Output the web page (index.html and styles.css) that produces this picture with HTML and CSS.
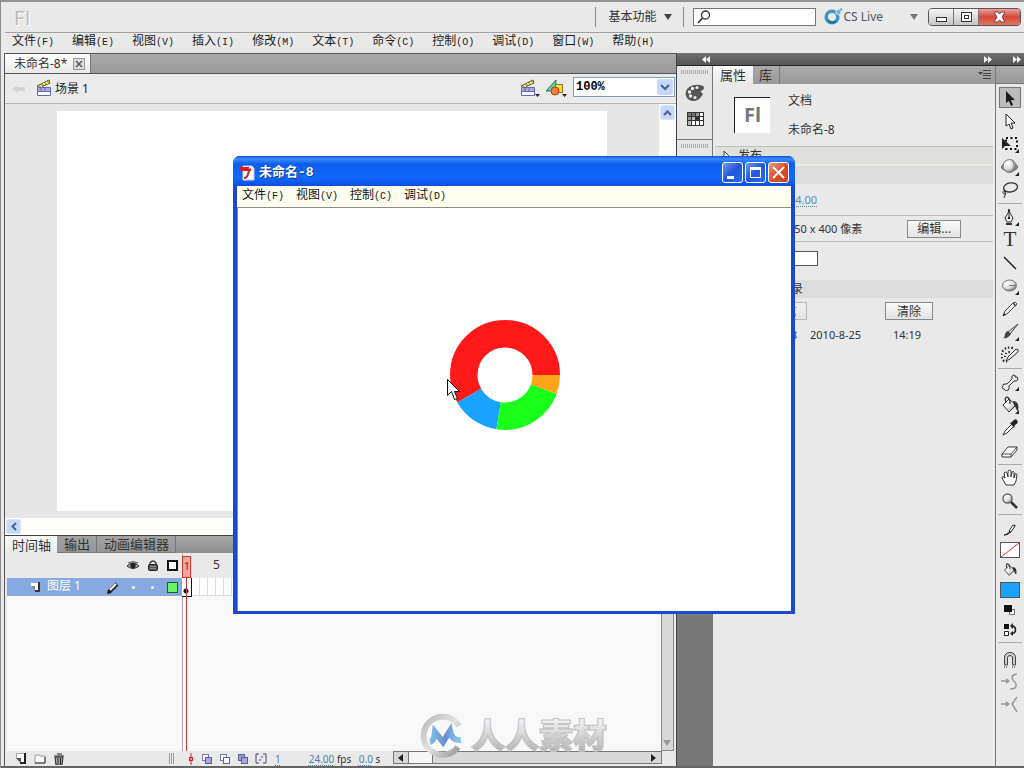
FILE: index.html
```html
<!DOCTYPE html>
<html lang="zh-CN">
<head>
<meta charset="utf-8">
<title>未命名-8</title>
<link rel="stylesheet" href="styles.css">
</head>
<body>
<svg class="defs" aria-hidden="true">
  <defs>
    <linearGradient id="metal" x1="0" y1="0" x2="1" y2="1"><stop offset="0" stop-color="#fff"/><stop offset=".5" stop-color="#eee"/><stop offset="1" stop-color="#888"/></linearGradient>
    <radialGradient id="ball" cx=".35" cy=".3" r=".8"><stop offset="0" stop-color="#fff"/><stop offset=".55" stop-color="#ddd"/><stop offset="1" stop-color="#555"/></radialGradient>
    <linearGradient id="ring" x1="0" y1="0" x2="1" y2="1"><stop offset="0" stop-color="#b9b9b9"/><stop offset=".5" stop-color="#e2e2e2"/><stop offset="1" stop-color="#969696"/></linearGradient>
    <linearGradient id="wave" x1="0" y1="0" x2="1" y2="0"><stop offset="0" stop-color="#7cc0e8"/><stop offset=".5" stop-color="#6d8fd0"/><stop offset="1" stop-color="#8ed0ee"/></linearGradient>
    <symbol id="clapper" viewBox="0 0 16 18"><path d="M1 7 13 1l1 3L3 9z" fill="#c9bf35" stroke="#65601f"/><path d="M4 6l2 2M7 4l2 2M10 3l2 2" stroke="#fff" stroke-width="1"/><path d="M1.500 8.500h13v8h-13z" fill="#fff" stroke="#6468b4"/><path d="M2 9h12v3H2z" fill="#a8abdc"/><path d="M2 12.500h12M5 9v3M9 9v3" stroke="#6468b4"/></symbol>
    <symbol id="forward" viewBox="0 0 8 7"><path d="M0 0l4 3.500L0 7zM4 0l4 3.500L4 7z" fill="#f4f4f4"/></symbol>
    <symbol id="corner" viewBox="0 0 4 4"><path d="M4 0v4H0z" fill="#222"/></symbol>
    <symbol id="bucket" viewBox="0 0 18 18"><path d="M2 9 8 3l7 6-7 7z" fill="url(#metal)" stroke="#333"/><path d="M5 7C2-1 9-1 9 8" fill="none" stroke="#333" stroke-width="1.300"/><path d="M12 5c5 0 6 4 5 10-2-1-2-4-4-6z" fill="#333"/></symbol>
    <symbol id="pencil" viewBox="0 0 18 18"><path d="M2 16l2-5 8-8q3-2 4 1L7 13z" fill="url(#metal)" stroke="#444"/><path d="M2 16l1-3 2 2z" fill="#222"/><path d="M12 3l3 3" stroke="#444" stroke-width="1.500"/></symbol>
  </defs>
</svg>
<div class="app">
  <header class="titlebar">
    <span class="brand">Fl</span>
    <div class="titletools">
      <button class="workspace-switch">基本功能<svg width="9" height="6"><path d="M0 0h8L4 6z" fill="#444"/></svg></button>
      <label class="search" aria-label="搜索"><svg width="14" height="14" viewBox="0 0 14 14"><circle cx="8.500" cy="5" r="4" fill="none" stroke="#333" stroke-width="1.300"/><path d="M5.500 8 1 13" stroke="#333" stroke-width="1.700"/></svg><input type="text"></label>
      <button class="cslive"><svg width="19" height="18" viewBox="0 0 19 18"><circle cx="8" cy="9" r="5.800" fill="none" stroke="#3f98bd" stroke-width="3.600"/><path d="M4 12a5 5 0 0 0 8 1" fill="none" stroke="#216f99" stroke-width="2"/><circle cx="14.500" cy="4" r="2.600" fill="#60b5d3" stroke="#e8e8e8"/><circle cx="17" cy="1.500" r="1.200" fill="#60b5d3"/></svg><span>CS Live</span><svg class="caret" width="8" height="6"><path d="M0 0h8L4 6z" fill="#777"/></svg></button>
      <div class="appbuttons">
        <button aria-label="最小化"><svg width="13" height="12"><rect x="1.500" y="6.500" width="10" height="4" fill="#fff" stroke="#333"/></svg></button>
        <button aria-label="还原"><svg width="13" height="12"><rect x="1.500" y="1.500" width="10" height="9" fill="#fff" stroke="#333"/><rect x="4.500" y="4.500" width="4" height="3" fill="#fff" stroke="#333"/></svg></button>
        <button class="close" aria-label="关闭"><svg width="13" height="12" viewBox="0 0 13 12"><path d="M1 1h4l1.500 2L8 1h4L9 6l3 5H8L6.500 9 5 11H1l3-5z" fill="#fff" stroke="#744"/></svg></button>
      </div>
    </div>
  </header>
  <nav class="menubar">
    <button>文件<span>(F)</span></button><button>编辑<span>(E)</span></button><button>视图<span>(V)</span></button><button>插入<span>(I)</span></button><button>修改<span>(M)</span></button><button>文本<span>(T)</span></button><button>命令<span>(C)</span></button><button>控制<span>(O)</span></button><button>调试<span>(D)</span></button><button>窗口<span>(W)</span></button><button>帮助<span>(H)</span></button>
  </nav>
  <div class="workspace">
    <main class="document">
      <div class="doctabs"><div class="doctab">未命名-8*<button aria-label="关闭文档"><svg width="8" height="8"><path d="M1 1l6 6M7 1 1 7" stroke="#555" stroke-width="1.500"/></svg></button></div></div>
      <div class="editbar">
        <svg width="14" height="10" viewBox="0 0 14 10"><path d="M0 5l5-4v2h8v4H5v2z" fill="#d2d2d2"/></svg>
        <svg class="scene" width="16" height="18"><use href="#clapper"/></svg><span class="scenename">场景 1</span>
        <div class="edittools">
          <button aria-label="编辑场景"><svg width="21" height="19"><use href="#clapper" width="16" height="18"/><path d="M15 15h5l-2.500 3z" fill="#222"/></svg></button>
          <button aria-label="编辑元件"><svg width="22" height="19" viewBox="0 0 22 19"><path d="M0 12 10 1v11z" fill="#5bd39a" stroke="#237a55"/><rect x="9.500" y="5.500" width="7" height="8" fill="#f0dc3c" stroke="#8c7b20"/><circle cx="9" cy="12" r="4" fill="#ff7a3c" stroke="#a8421d"/><path d="M16 15h5l-2.500 3z" fill="#222"/></svg></button>
          <label class="zoom"><select aria-label="缩放"><option>100%</option></select><svg width="16" height="16"><rect width="16" height="16" rx="2" fill="#c6d8fc"/><path d="M4 6l4 4 4-4" fill="none" stroke="#4d6185" stroke-width="2"/></svg></label>
        </div>
      </div>
      <div class="canvas">
        <div class="stage"></div>
        <div class="vscroll"><button aria-label="向上"><svg width="9" height="6"><path d="M1 5l3.500-3.500L8 5" fill="none" stroke="#4d6185" stroke-width="2"/></svg></button></div>
      </div>
      <div class="hscroll"><button aria-label="向左"><svg width="6" height="9"><path d="M5 1 1.500 4.500 5 8" fill="none" stroke="#4d6185" stroke-width="2"/></svg></button></div>
      <div class="tltabs"><button class="on">时间轴</button><button>输出</button><button>动画编辑器</button></div>
      <section class="timeline">
        <div class="layers">
          <div class="layerhead">
            <svg width="12" height="9" viewBox="0 0 12 9"><path d="M0 5Q6-1 12 5 6 10 0 5z" fill="#aaa" stroke="#333"/><circle cx="6" cy="4.500" r="2.700" fill="#222"/><path d="M1 2q5-3 10 0" stroke="#555" fill="none"/></svg>
            <svg width="10" height="11" viewBox="0 0 10 11"><path d="M2 5V3q3-4 6 0v2" fill="none" stroke="#444" stroke-width="1.500"/><rect x=".5" y="4.500" width="9" height="6" rx="1" fill="#555" stroke="#222"/><path d="M2 6.500h6M2 8.500h6" stroke="#888"/></svg>
            <span class="outline"></span>
          </div>
          <div class="layer">
            <svg width="10" height="10" viewBox="0 0 10 10"><path d="M1 1h8v8H6L1 4z" fill="#fff"/><path d="M9 0v9H5" fill="none" stroke="#333" stroke-width="2"/><path d="M1 4l4 5V4z" fill="#888"/></svg>
            <span class="layername">图层 1</span>
            <svg width="13" height="13" viewBox="0 0 13 13"><path d="M2 11 10 3" stroke="#222" stroke-width="4"/><path d="M3 9 9 3" stroke="#fff" stroke-width="2"/><path d="M0 13l1-4 3 3z" fill="#111"/></svg>
            <i class="dot"></i><i class="dot"></i><span class="outline green"></span>
          </div>
        </div>
        <div class="frames">
          <div class="ruler"><span>5</span></div>
          <div class="cells"></div>
          <div class="playhead"><span>1</span></div>
        </div>
        <div class="tlscroll"><svg width="9" height="6"><path d="M0 0h8L4 6z" fill="#999"/></svg></div>
      </section>
      <footer class="tlfoot">
        <div class="layertools">
          <button aria-label="新建图层"><svg width="11" height="11"><path d="M1.500.500h8v9h-4l-4-4z" fill="#fff" stroke="#aaa"/><path d="M10 0v10H5" fill="none" stroke="#222" stroke-width="2"/><path d="M1 5l5 5V5z" fill="#555"/></svg></button>
          <button aria-label="新建文件夹"><svg width="12" height="10"><path d="M1 8V2l1-1h3l1 1h5v7H1z" fill="#fff" stroke="#999"/><path d="M1 9h10V3" fill="none" stroke="#333"/></svg></button>
          <button aria-label="删除"><svg width="10" height="12"><path d="M1 4h8l-1 8H2z" fill="#aaa" stroke="#222"/><path d="M0 3h10M3 1h5M4 5v6M6.500 5v6" stroke="#222"/></svg></button>
          <i class="grip"></i>
        </div>
        <div class="onion">
          <svg width="6" height="12"><path d="M3 0v12" stroke="#c22"/><rect x="1.500" y="4.500" width="3" height="3" fill="#f88" stroke="#c22"/></svg>
          <svg width="11" height="11"><rect x="1.500" y="1.500" width="6" height="6" fill="#fff" stroke="#7776b0"/><rect x="4.500" y="4.500" width="6" height="6" fill="#a5a7dc" stroke="#5f5e9c"/></svg>
          <svg width="11" height="11"><rect x="1.500" y="1.500" width="6" height="6" fill="#fff" stroke="#7776b0"/><rect x="4.500" y="4.500" width="6" height="6" fill="#fff" stroke="#5f5e9c"/></svg>
          <svg width="11" height="11"><rect x="1.500" y="1.500" width="6" height="6" fill="#9a9bd0" stroke="#5f5e9c"/><rect x="4.500" y="4.500" width="6" height="6" fill="#a5a7dc" stroke="#5f5e9c"/></svg>
          <svg width="12" height="11"><path d="M4 1H1v9h3M8 1h3v9H8M4 7h2M6 4h2" fill="none" stroke="#444478"/></svg>
        </div>
        <span class="blue frame">1</span><span class="rate"><span class="blue">24.00</span> fps</span><span class="secs"><span class="blue">0.0</span> s</span>
        <div class="tlh"><svg width="6" height="8"><path d="M5 0v8L0 4z" fill="#222"/></svg><i></i><svg class="end" width="6" height="8"><path d="M0 0v8l5-4z" fill="#222"/></svg></div>
      </footer>
    </main>

    <aside class="dock">
      <div class="dockbar"><svg width="8" height="7" viewBox="0 0 8 7"><path d="M4 0v7L0 3.500zM8 0v7L4 3.500z" fill="#f4f4f4"/></svg></div>
      <div class="dockgroup">
        <i class="dots"></i>
        <button aria-label="颜色"><svg width="20" height="18" viewBox="0 0 20 18"><path d="M1 12C-1 4 7 0 15 1q6 1 3 5-4 1-1 3 2 1-1 4c-4 6-13 5-15-1z" fill="#555"/><g fill="#eee"><circle cx="4.500" cy="8" r="1.700"/><circle cx="7.500" cy="4.500" r="1.700"/><circle cx="12" cy="3.500" r="1.500"/><circle cx="5.500" cy="12" r="1.700"/><circle cx="10" cy="13.500" r="1.500"/></g></svg></button>
        <button aria-label="样本"><svg width="17" height="14" viewBox="0 0 17 14"><path d="M0 0h17v14H0z" fill="#333"/><path d="M1 1h3v3H1zM5 1h3v3H5z" fill="#777"/><path d="M9 1h3v3H9zM1 5h3v3H1z" fill="#999"/><path d="M13 1h3v3h-3zM13 5h3v3h-3zM5 9h3v4H5zM9 9h3v4H9zM13 9h3v4h-3z" fill="#fff"/><path d="M5 5h3v3H5zM1 9h3v4H1z" fill="#bbb"/></svg></button>
      </div>
      <div class="dockgroup second"><i class="dots"></i></div>
    </aside>

    <aside class="props">
      <div class="dockbar"><svg width="8" height="7"><use href="#forward"/></svg></div>
      <div class="proptabs"><button class="on">属性</button><button>库</button><svg width="13" height="9"><path d="M0 2h5L2.500 5z" fill="#444"/><path d="M5 .5h8M5 3.500h8M5 5.500h8M5 8.500h8" stroke="#444"/></svg></div>
      <div class="docinfo"><div class="flicon">Fl</div><div class="docname"><span>文档</span><span>未命名-8</span></div></div>
      <div class="publish"><svg width="7" height="12"><path d="M1 1v10l5-5z" fill="#eee" stroke="#444"/></svg>发布</div>
      <div class="band"></div>
      <div class="prow fps"><a href="#fps">24.00</a></div>
      <div class="prow size"><span>550 x 400 像素</span><button class="pbtn">编辑...</button></div>
      <div class="prow fill"><button class="fillswatch" aria-label="舞台颜色"></button></div>
      <div class="band history"><span>SWF 历史记录</span></div>
      <div class="prow log"><button class="pbtn faded">日志</button><button class="pbtn clear">清除</button></div>
      <div class="prow entry"><span>未命名-8</span><span>2010-8-25</span><span>14:19</span></div>
    </aside>

    <aside class="toolcol">
      <div class="dockbar"><svg width="8" height="7"><use href="#forward"/></svg></div>
      <div class="toolcap"></div>
      <div class="tools">
        <button class="on" aria-label="选择"><svg width="18" height="18"><path d="M5 2v12l3-2 2 5 2-1-2-5h4z" fill="#1c1c1c"/></svg></button>
        <button aria-label="部分选取"><svg width="18" height="18"><path d="M5 2v12l3-2 2 5 2-1-2-5h4z" fill="#fff" stroke="#222"/></svg></button>
        <button aria-label="任意变形"><svg width="18" height="18"><rect x="5" y="3" width="11" height="11" fill="none" stroke="#111" stroke-width="2" stroke-dasharray="2 2.500"/><path d="M1 3v11l3-3h6z" fill="#222"/><use href="#corner" x="14" y="14" width="4" height="4"/></svg></button>
        <button aria-label="3D 旋转"><svg width="18" height="18"><ellipse cx="8.500" cy="9" rx="8" ry="4" fill="#aaa" stroke="#555"/><circle cx="8.500" cy="8" r="6.500" fill="url(#ball)" stroke="#777"/><path d="M11 2q4 6 0 12" fill="none" stroke="#888"/><use href="#corner" x="14" y="14" width="4" height="4"/></svg></button>
        <button aria-label="套索"><svg width="18" height="18"><ellipse cx="9.500" cy="6.500" rx="7" ry="4.500" fill="none" stroke="#333" stroke-width="1.300" transform="rotate(-10 9 6)"/><path d="M4 10q-4 0-1 3 3 1 1-3 1 4-1 7" fill="none" stroke="#333"/></svg></button>
        <hr>
        <button aria-label="钢笔"><svg width="18" height="18"><path d="M8 1q0 4 4 9l-2 4H6l-2-4q4-5 4-9z" fill="#fff" stroke="#222"/><path d="M8 2v8" stroke="#222"/><circle cx="8" cy="10" r="1.300" fill="#222"/><path d="M5 15h6v2H5z" fill="#333"/><use href="#corner" x="14" y="14" width="4" height="4"/></svg></button>
        <button class="texttool" aria-label="文本">T</button>
        <button aria-label="线条"><svg width="18" height="18"><path d="M3 3l12 12" stroke="#222" stroke-width="1.500"/></svg></button>
        <button aria-label="椭圆"><svg width="18" height="18"><ellipse cx="8.500" cy="8.500" rx="7" ry="5.500" fill="url(#ball)" stroke="#777"/><path d="M8 8.500h7" stroke="#777"/><use href="#corner" x="14" y="14" width="4" height="4"/></svg></button>
        <button aria-label="铅笔"><svg width="18" height="18"><use href="#pencil"/></svg></button>
        <button aria-label="刷子"><svg width="18" height="18"><path d="M17 1 9 11 7 9z" fill="#ddd" stroke="#444"/><path d="M7 8l3 3q-3 5-8 4 2-1 2-4 1-3 3-3z" fill="#444"/><use href="#corner" x="14" y="14" width="4" height="4"/></svg></button>
        <button aria-label="装饰刷"><svg width="18" height="18"><path d="M5 15l2-4 8-8q3 0 2 3l-8 7z" fill="url(#metal)" stroke="#333"/><path d="M12 2Q5 0 1 6q-2 5 2 9l3 1" fill="none" stroke="#222" stroke-width="2.200" stroke-dasharray="1.500 2"/><path d="M9 6Q4 6 4 11" fill="none" stroke="#333" stroke-width="2" stroke-dasharray="1.500 2"/></svg></button>
        <hr>
        <button aria-label="骨骼"><svg width="18" height="18"><path d="M3 16q-3 0-1-3-1-2 2-2h2l5-5q-1-4 2-4 2 0 1 2 3-1 3 2-1 3-4 2l-5 5q1 4-2 5-2 0-3-2z" fill="url(#metal)" stroke="#333"/><use href="#corner" x="14" y="14" width="4" height="4"/></svg></button>
        <button aria-label="颜料桶"><svg width="18" height="18"><use href="#bucket"/><use href="#corner" x="14" y="14" width="4" height="4"/></svg></button>
        <button aria-label="滴管"><svg width="18" height="18"><path d="M2 16l2-4 7-7 2 2-7 7z" fill="#fff" stroke="#333"/><path d="M9 4l2-1q3-4 5-2 2 3-2 5l-1 3z" fill="#222"/></svg></button>
        <button aria-label="橡皮擦"><svg width="18" height="18"><path d="M1 12l6-7h9v3l-6 7H1z" fill="#fff" stroke="#333"/><path d="M1 12h9l6-7M10 12v3" fill="none" stroke="#444"/></svg></button>
        <hr>
        <button aria-label="手形"><svg width="18" height="18"><path d="M5 16 1 9q0-3 3 0L3 4q1-2 3 0l1 4V2q2-2 3 0v6l1-5q2-1 2 0v6l1-4q2-1 2 1l-1 6-2 4z" fill="#fff" stroke="#333"/></svg></button>
        <button aria-label="缩放工具"><svg width="18" height="18"><circle cx="6.500" cy="6.500" r="4.500" fill="url(#metal)" stroke="#666" stroke-width="1.500"/><path d="M10 10l6 6" stroke="#333" stroke-width="2.500"/></svg></button>
        <hr>
        <div class="colors">
          <svg width="18" height="18"><path d="M3 14q3 0 6-3l5-7" fill="none" stroke="#222" stroke-width="1.700"/><path d="M8 10l4-6 2 1-4 6z" fill="#fff" stroke="#333"/></svg>
          <button class="swatch" aria-label="笔触颜色"><svg width="18" height="14"><path d="M0 14 18 0" stroke="#d33"/></svg></button>
          <svg width="14" height="14"><use href="#bucket"/></svg>
          <button class="swatch blueswatch" aria-label="填充颜色"></button>
          <button aria-label="黑白"><svg width="14" height="14"><rect x="6.500" y="6.500" width="5" height="5" fill="#fff" stroke="#777"/><path d="M1 2h8v7H1z" fill="#111"/></svg></button>
          <button aria-label="交换颜色"><svg width="14" height="14"><path d="M1 1h5v5H1z" fill="#111"/><path d="M1.500 8.500h4v4h-4z" fill="#fff" stroke="#222"/><path d="M8 3h2q2.500 1 2.500 4T9 10.500" fill="none" stroke="#222" stroke-width="1.500"/><path d="M10 0v6L7 3zM10 8v5l-3-2.500z" fill="#222"/></svg></button>
        </div>
        <hr>
        <button class="snap" aria-label="贴紧至对象"><svg width="18" height="18"><path d="M3.500 15V8q0-5.500 5.500-5.500T14.500 8v7h-3V8q0-2.500-2.500-2.500T6.500 8v7z" fill="#ccc" stroke="#444"/><path d="M3 17h4M11 17h4" stroke="#222" stroke-dasharray="1 1"/></svg></button>
        <button aria-label="平滑" disabled><svg width="18" height="18"><path d="M0 8h5" stroke="#999" stroke-width="1.500"/><path d="M5 5l4 3-4 3z" fill="#999"/><path d="M16 1q-7 1-4 6 5 4 2 8-2 1-5 1" fill="none" stroke="#999" stroke-width="1.500"/></svg></button>
        <button aria-label="伸直" disabled><svg width="18" height="18"><path d="M0 8h5" stroke="#999" stroke-width="1.500"/><path d="M5 5l4 3-4 3z" fill="#999"/><path d="M16 1l-5 7 5 8" fill="none" stroke="#999" stroke-width="1.500"/></svg></button>
      </div>
    </aside>
  </div>

  <section class="player" aria-label="未命名-8">
    <header class="ptitle">
      <svg width="15" height="16" viewBox="0 0 15 16"><path d="M3 1h9l2 2v12H3z" fill="#fff" stroke="#ccc"/><path d="M0 2h9v4H0z" fill="#d81e1e"/><path d="M11 4Q9 5 8 9q-1 4-4 4" fill="none" stroke="#c22" stroke-width="2"/></svg>
      <h1>未命名-8</h1>
      <div class="pbuttons">
        <button aria-label="最小化窗口"><svg width="17" height="17"><path d="M3 12h7v3H3z" fill="#fff"/></svg></button>
        <button aria-label="最大化窗口"><svg width="17" height="17"><path d="M3.500 4.500h10v9h-10z" fill="none" stroke="#fff"/><path d="M3 4.500h11" stroke="#fff" stroke-width="3"/></svg></button>
        <button class="pclose" aria-label="关闭窗口"><svg width="17" height="17"><path d="M3 3l11 11M14 3 3 14" stroke="#fff" stroke-width="2"/></svg></button>
      </div>
    </header>
    <nav class="pmenu"><button>文件<span>(F)</span></button><button>视图<span>(V)</span></button><button>控制<span>(C)</span></button><button>调试<span>(D)</span></button></nav>
    <div class="movie">
      <svg width="124" height="114" viewBox="0 0 124 114">
        <g fill="none" stroke-width="27.500">
          <circle cx="62" cy="57" r="41.250" stroke="#ff1919" pathLength="360" stroke-dasharray="210 150" stroke-dashoffset="-150"/>
          <circle cx="62" cy="57" r="41.250" stroke="#19a3ff" pathLength="360" stroke-dasharray="51 309" stroke-dashoffset="-99"/>
          <circle cx="62" cy="57" r="41.250" stroke="#19ff19" pathLength="360" stroke-dasharray="79 281" stroke-dashoffset="-20"/>
          <circle cx="62" cy="57" r="41.250" stroke="#ffa319" pathLength="360" stroke-dasharray="20 340"/>
        </g>
        <path d="M4.500 61.500v16l4-4 3 8 3-1-3-7h5z" fill="#fff" stroke="#111"/>
      </svg>
    </div>
  </section>

  <div class="watermark">
    <svg width="44" height="46" viewBox="0 0 44 46"><path d="M39 13A19 19 0 1 0 38 34" fill="none" stroke="url(#ring)" stroke-width="6"/><path d="M10 29q4-1 5-10l8 10 7-11q2 10 11 9" fill="none" stroke="url(#wave)" stroke-width="6"/></svg>
    <span>人人素材</span>
  </div>
</div>
</body>
</html>
```

FILE: styles.css
```css
* { box-sizing: border-box; }
body { margin: 0; font: 12px/16px "Noto Sans", "Noto Sans CJK SC", sans-serif; color: #333; }
button { font: inherit; color: inherit; background: none; border: 0; padding: 0; margin: 0; }
svg { display: block; flex: none; }
.defs { position: absolute; width: 0; height: 0; }
.app { position: relative; min-height: 100vh; display: flex; flex-direction: column; background: #e9e9e9; border-top: 2px solid #929292; border-left: 1px solid #8b8b8b; overflow: hidden; }

.titlebar { display: flex; align-items: center; justify-content: space-between; height: 31px; margin-left: 4px; padding: 0 3px 0 9px; border-bottom: 1px solid #a0a0a0; }
.brand { font: 20px/24px Lato, sans-serif; color: #bebebe; text-shadow: 1px 1px #fff; }
.titletools { display: flex; align-items: center; }
.workspace-switch { display: flex; align-items: center; gap: 8px; height: 20px; padding: 0 10px 0 12px; border: solid #888; border-width: 0 1px; line-height: 14px; }
.search { display: flex; align-items: center; width: 123px; height: 18px; margin: 0 8px 0 9px; padding-left: 3px; background: #fff; border: 1px solid #777; }
.search input { flex: 1; min-width: 0; height: 14px; border: 0; padding: 0 4px; outline: 0; }
.cslive { display: flex; align-items: center; color: #555; }
.cslive .caret { margin: 0 10px 0 27px; }
.appbuttons { display: flex; height: 18px; border: 1px solid #555; border-radius: 4px; overflow: hidden; }
.appbuttons button { width: 25px; display: grid; place-items: center; background: linear-gradient(#f5f5f5, #ddd 50%, #c4c4c4); border-right: 1px solid #777; }
.appbuttons .close { width: 41px; background: linear-gradient(#eba094, #d5483a 50%, #e07866); border: 0; }

.menubar { display: flex; gap: 18px; height: 20px; padding: 0 11px; align-items: flex-start; color: #1c1c1c; }
.menubar button, .pmenu button { white-space: nowrap; height: 16px; }
.menubar span, .pmenu span { font: 10px/16px "Liberation Mono", monospace; }

.workspace { flex: 1; display: flex; padding-left: 3px; border-bottom: 2px solid #666; }
.document { flex: 1; min-width: 0; display: flex; flex-direction: column; border-left: 1px solid #555; border-top: 1px solid #555; border-right: 1px solid #444; }
.doctabs { height: 20px; display: flex; background: linear-gradient(#aaa, #999); border-bottom: 1px solid #555; }
.doctab { display: flex; align-items: center; gap: 6px; padding: 0 5px 0 9px; background: linear-gradient(#fff, #e9e9e9); border-right: 1px solid #777; }
.doctab button { width: 12px; height: 12px; display: grid; place-items: center; border: 1px solid #999; background: #ddd; }
.editbar { height: 30px; display: flex; align-items: center; padding: 0 1px 0 7px; border-bottom: 1px solid #b4b4b4; background: #eaeaea; }
.scene { margin: 0 3px 2px 10px; }
.scenename { color: #222; }
.edittools { margin-left: auto; display: flex; align-items: center; gap: 5px; }
.zoom { display: grid; width: 102px; height: 20px; align-items: center; background: #fff; border: 1px solid #7f9db9; margin-bottom: 3px; }
.zoom select { grid-area: 1 / 1; width: 100%; height: 18px; appearance: none; border: 0; background: none; padding: 0 2px; font: bold 12px/16px "Liberation Mono", monospace; color: #000; }
.zoom svg { grid-area: 1 / 1; justify-self: end; margin-right: 1px; pointer-events: none; }
.canvas { flex: 1; display: flex; justify-content: space-between; background: #e6e6e6; padding-left: 52px; }
.stage { width: 550px; height: 400px; margin: 7px 0 6px; background: #fff; }
.vscroll { width: 17px; background: #fdfdfa; padding: 1px; }
.vscroll button, .hscroll button { width: 15px; height: 15px; display: grid; place-items: center; background: #c6d8fc; border: 1px solid #dbe6fd; border-radius: 2px; }
.hscroll { height: 17px; padding: 1px; background: #fdfdfa; }
.tltabs { display: flex; height: 18px; background: linear-gradient(#a8a8a8, #8e8e8e); border-top: 1px solid #444; }
.tltabs button { padding: 0 6px 0 7px; border-right: 1px solid #777; font-size: 13px; line-height: 16px; background: linear-gradient(#a2a2a2, #969696); border-bottom: 1px solid #777; }
.tltabs .on, .proptabs .on { background: linear-gradient(#fafafa, #e9e9e9); border: 0; }
.timeline { display: flex; min-height: 198px; padding-left: 2px; }
.layers { width: 176px; border-right: 1px solid #aaa; background: #f8f8f8; }
.layerhead { height: 25px; display: flex; align-items: center; justify-content: flex-end; gap: 9px; padding-right: 4px; background: #e9e9e9; }
.outline { width: 11px; height: 11px; border: 2px solid #111; background: #fff; }
.outline.green { border: 1px solid #285a28; background: #66f466; }
.layer { height: 18px; display: flex; align-items: center; padding: 0 4px 0 23px; background: #86a9df; color: #fff; }
.layername { flex: 1; margin: 0 0 2px 7px; }
.dot { width: 3px; height: 3px; margin: 0 0 0 12px; border-radius: 50%; background: #fff; }
.dot + .dot { margin: 0 13px 0 16px; }
.frames { position: relative; flex: 1; min-width: 0; background: #f8f8f8; }
.ruler { height: 25px; padding: 4px 0 0 30px; background: #e9e9e9; }
.cells { height: 18px; margin-left: 9px; background: repeating-linear-gradient(90deg, #fff 0 7px, #ddd 7px 8px); border-bottom: 1px solid #ddd; }
.playhead { position: absolute; left: -1px; top: 3px; bottom: 0; width: 9px; font-size: 10px; }
.playhead span { display: block; height: 22px; padding-left: 1px; line-height: 18px; border: 1px solid #c33; background: #ffa5a0; }
.playhead::before { content: ""; position: absolute; left: 0; top: 22px; width: 9px; height: 18px; border: solid #111; border-width: 0 1px 1px 0; background: radial-gradient(circle at 4px 13px, #111 0 2px, #fff 3px); }
.playhead::after { content: ""; position: absolute; left: 4px; top: 22px; bottom: 0; width: 1px; background: #c43a42; }
.tlscroll { width: 13px; display: flex; align-items: flex-end; justify-content: center; padding-bottom: 4px; margin-right: 2px; background: #d8d8d8; border: 1px solid #888; border-top: 0; }
.tlfoot { height: 15px; display: flex; align-items: center; padding-left: 10px; font-size: 10px; line-height: 12px; white-space: nowrap; }
.layertools { width: 160px; display: flex; gap: 8px; }
.grip { width: 6px; height: 11px; margin-left: auto; background: repeating-linear-gradient(90deg, #999 0 1px, #eee 1px 2px); }
.onion { display: flex; align-items: center; gap: 7px; margin-left: 13px; }
.blue { color: #4f7fb8; text-decoration: underline dotted; text-underline-offset: 2px; }
.blue.frame { margin-left: 8px; }
.rate { width: 50px; margin-left: 28px; }
.secs { width: 34px; }
.tlh { flex: 1; height: 13px; margin: 0 14px 2px 0; display: flex; align-items: center; background: #d8d8d8; border: 1px solid #777; padding: 0 4px; }
.tlh i { height: 11px; width: 25px; margin-left: 4px; background: #f6f6f6; border: solid #777; border-width: 0 1px; }
.tlh .end { margin-left: auto; }

.dockbar { height: 13px; display: flex; align-items: center; justify-content: flex-end; padding-right: 3px; background: linear-gradient(#707070, #555); border-bottom: 1px solid #222; }
.dock { width: 36px; background: #787878; }
.dockgroup { display: flex; flex-direction: column; align-items: center; gap: 12px; height: 74px; padding-top: 4px; background: #e6e6e6; border-bottom: 1px solid #777; }
.dockgroup:not(.second) { gap: 10px; }
.dockgroup.second { height: 240px; }
.dots { width: 28px; height: 4px; background: repeating-linear-gradient(90deg, #aaa 0 1px, #e6e6e6 1px 2px); }

.props { width: 283px; margin-left: -1px; border-left: 1px solid #777; background: #e9e9e9; }
.props .dockbar { margin-left: -1px; }
.proptabs { display: flex; height: 18px; background: linear-gradient(#aaa, #999); padding-right: 4px; align-items: stretch; }
.proptabs button { font-size: 13px; line-height: 16px; padding: 0 7px 0 6px; border-right: 1px solid #777; }
.proptabs .on { padding-left: 7px; }
.proptabs svg { margin: 4px 0 0 auto; }
.docinfo { display: flex; gap: 18px; height: 62px; padding: 9px 21px; }
.flicon { width: 36px; height: 36px; margin-top: 4px; background: #fff; border: solid #222; border-width: 1px 0 0 1px; font: bold 20px/34px "Open Sans", sans-serif; color: #777; text-align: center; }
.docname { display: flex; flex-direction: column; gap: 13px; }
.publish { height: 18px; display: flex; align-items: center; gap: 8px; padding-left: 8px; margin: 0 2px; background: #dfdfdb; border-top: 1px solid #bfc0b5; }
.publish { line-height: 12px; }
.band { height: 18px; margin: 2px 2px 0; background: #dcdcdc; }
.prow { display: flex; align-items: center; margin: 0 2px; font-size: 11px; }
.fps { height: 32px; border-bottom: 1px solid #bbb; }
.fps a { width: 102px; text-align: right; color: #568bc1; text-decoration: underline dotted; text-underline-offset: 2px; }
.size { height: 26px; justify-content: space-between; padding-left: 73px; padding-right: 32px; border-bottom: 1px solid #bbb; }
.pbtn { height: 18px; padding: 0 9px; border: 1px solid #888; background: linear-gradient(#fafafa, #e2e2e2); font-size: 12px; line-height: 15px; }
.fill { height: 32px; padding-left: 63px; }
.fillswatch { width: 40px; height: 15px; background: #fff; border: 1px solid #555; }
.history { margin-top: 6px; padding-left: 12px; line-height: 18px; }
.history span { display: block; width: 76px; text-align: right; white-space: nowrap; }
.log { height: 26px; padding-left: 48px; }
.faded { opacity: 0.5; }
.clear { margin-left: 78px; padding: 0 11px; }
.entry { height: 22px; }
.entry span:first-child { width: 82px; text-align: right; }
.entry span:nth-child(2) { width: 96px; padding-left: 13px; }

.toolcol { width: 29px; border-left: 1px solid #777; }
.toolcol .dockbar { margin-left: -1px; }
.toolcap { height: 18px; background: linear-gradient(#aaa, #999); border-bottom: 1px solid #777; }
.tools { display: flex; flex-direction: column; align-items: center; padding-top: 2px; }
.tools > button { width: 22px; height: 23px; display: grid; place-items: center; }
.tools > .on { height: 21px; margin: 1px 0; background: #bbb; border: 1px solid #777; }
.tools hr { width: 24px; height: 4px; margin: 0; border: solid transparent; border-width: 2px 0 1px; background: #aaa; background-clip: padding-box; }
.tools > .texttool { font: 21px/23px "Liberation Serif", serif; }
.tools > .snap { margin-top: 3px; }
.colors { display: grid; grid-auto-rows: 20px; place-items: center; padding: 4px 0 0; }
.swatch { width: 20px; height: 16px; border: 1px solid #555; background: #fff; }
.blueswatch { background: #19a3ff; }

.player { position: absolute; left: 232px; top: 154px; border: 4px solid #1a48cf; border-top: 0; border-bottom-width: 3px; border-radius: 7px 7px 0 0; background: #1a48cf; }
.ptitle { height: 30px; margin: 0 -4px; padding: 3px 6px 0 7px; display: flex; align-items: center; gap: 4px; border-radius: 7px 7px 0 0; background: linear-gradient(#1450d8, #3a8cfa 3px, #0f5df0 8px, #1168ff 22px, #0d4fd8); }
.ptitle h1 { flex: 1; margin: 0; color: #fff; font: bold 13px/18px "Liberation Mono", "Noto Sans CJK SC", monospace; text-shadow: 1px 1px #123a8c; }
.pbuttons { display: flex; gap: 2px; }
.pbuttons button { width: 21px; height: 21px; display: grid; place-items: center; border: 1px solid #fff; border-radius: 3px; background: linear-gradient(135deg, #7397ef, #2156dc 50%, #2c6cf0); }
.pbuttons .pclose { background: linear-gradient(135deg, #ee9a80, #dc4f2c 50%, #c94023); }
.pmenu { display: flex; gap: 12px; height: 21px; padding: 1px 5px; background: #fffff0; color: #111; }
.movie { width: 554px; height: 404px; display: grid; place-items: center; background: #fff; border: solid #8c8c84; border-width: 1px 0 0 1px; padding: 0 19px 70px 0; }
.watermark { position: absolute; left: 419px; bottom: 9px; display: flex; align-items: center; gap: 7px; }
.watermark span { font: 900 34px/44px "Noto Sans CJK SC", sans-serif; margin-bottom: 3px; color: transparent; background: linear-gradient(#f1f1f1 20%, #b4b4b4 90%); background-clip: text; -webkit-text-stroke: 1px #c2c2c2; }
```
